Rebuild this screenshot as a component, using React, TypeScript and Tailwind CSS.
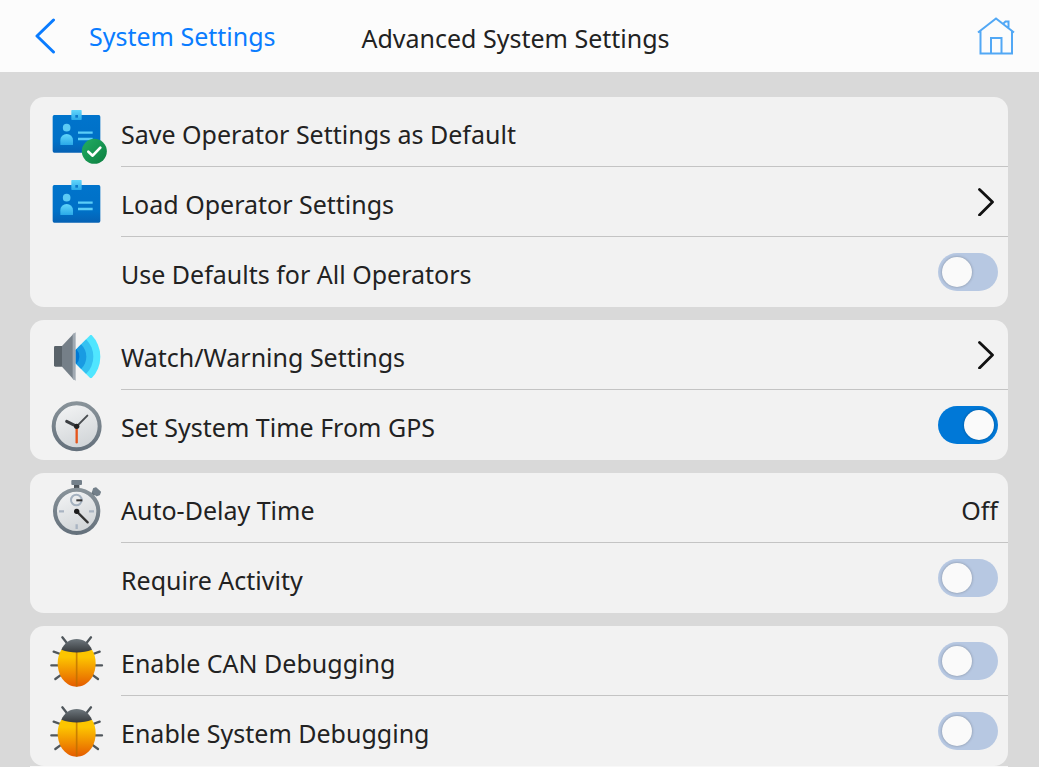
import React, { useState } from 'react';

function cn(...classes: (string | boolean | undefined | null)[]) {
  return classes.filter(Boolean).join(' ');
}

const ICON_CLASS = 'size-[60px] overflow-visible';

function OperatorIcon({ saved = false }: { saved?: boolean }) {
  return (
    <svg viewBox="0 0 180 180" className={ICON_CLASS} aria-hidden="true">
      <defs>
        <linearGradient id="badge-bg" x1="0" y1="0" x2="0" y2="1">
          <stop offset="0" stopColor="#0074cc" />
          <stop offset="0.7" stopColor="#0070c6" />
          <stop offset="1" stopColor="#0561b4" />
        </linearGradient>
        <linearGradient id="badge-fg" x1="0" y1="0" x2="0" y2="1">
          <stop offset="0" stopColor="#62d6fb" />
          <stop offset="1" stopColor="#2aa9e8" />
        </linearGradient>
        <linearGradient id="badge-ok" x1="0" y1="0" x2="1" y2="1">
          <stop offset="0" stopColor="#21ad64" />
          <stop offset="1" stopColor="#0d7f40" />
        </linearGradient>
      </defs>
      <rect x="20" y="39" width="143" height="113" rx="5" fill="url(#badge-bg)" />
      <rect x="76" y="24" width="31" height="30" rx="2" fill="url(#badge-fg)" />
      <rect x="88" y="39" width="8" height="8" fill="#0d78c9" />
      <circle cx="62" cy="77" r="11.5" fill="#5bcbf5" />
      <path d="M43 129v-14a19 19 0 0 1 38 0v14z" fill="url(#badge-fg)" />
      <path d="M96 92h44M96 111h44" stroke="#5bcdf7" strokeWidth="7" />
      {saved && (
        <>
          <circle cx="145" cy="148" r="37.5" fill="url(#badge-ok)" />
          <path d="M127 149l13 12 23-24" fill="none" stroke="#fff" strokeWidth="8" strokeLinecap="round" strokeLinejoin="round" />
        </>
      )}
    </svg>
  );
}

function SpeakerIcon() {
  return (
    <svg viewBox="0 0 180 180" className={ICON_CLASS} aria-hidden="true">
      <defs>
        <clipPath id="speaker-waves">
          <path d="M88 76L133 30h50v130h-50L88 114z" />
        </clipPath>
      </defs>
      <g clipPath="url(#speaker-waves)">
        <circle cx="69" cy="95" r="94" fill="#50e6ff" />
        <circle cx="69" cy="95" r="73" fill="#35c1f1" />
        <circle cx="69" cy="95" r="52" fill="#199be2" />
        <circle cx="69" cy="95" r="31" fill="#0078d4" />
      </g>
      <rect x="24" y="63" width="27" height="62" rx="4" fill="#596269" />
      <path d="M48 63l36-38v140l-36-40z" fill="#757f88" />
      <path d="M80 28l9-6v145l-9-6z" fill="#a0a9b2" />
    </svg>
  );
}

function DialGradients({ id }: { id: string }) {
  return (
    <defs>
      <linearGradient id={`${id}-rim`} x1="0" y1="0" x2="0" y2="1">
        <stop offset="0" stopColor="#889299" />
        <stop offset="1" stopColor="#65717c" />
      </linearGradient>
      <linearGradient id={`${id}-face`} x1="0.3" y1="0" x2="0.7" y2="1">
        <stop offset="0" stopColor="#f2f3f4" />
        <stop offset="1" stopColor="#cfd3d6" />
      </linearGradient>
    </defs>
  );
}

function ClockIcon() {
  return (
    <svg viewBox="0 0 180 180" className={ICON_CLASS} aria-hidden="true">
      <DialGradients id="clock" />
      <circle cx="92" cy="94" r="69" fill="url(#clock-face)" stroke="url(#clock-rim)" strokeWidth="12" />
      <path d="M92 94v48" stroke="#e5551b" strokeWidth="7" strokeLinecap="round" />
      <path d="M62 79l30 15" stroke="#3b3e42" strokeWidth="9" strokeLinecap="round" />
      <path d="M92 94l32-32" stroke="#4a4e52" strokeWidth="6" strokeLinecap="round" />
      <circle cx="92" cy="94" r="8" fill="#222" />
    </svg>
  );
}

function StopwatchIcon() {
  return (
    <svg viewBox="0 0 180 180" className={ICON_CLASS} aria-hidden="true">
      <DialGradients id="stopwatch" />
      <rect x="84" y="19" width="16" height="16" fill="#4b5258" />
      <rect x="76" y="6" width="32" height="15" rx="3" fill="#74808a" />
      <path d="M136 53l12-12" stroke="#5d6871" strokeWidth="12" />
      <path d="M143 32l7-2 13 12-3 8-8 3-12-11z" fill="#74808a" stroke="#74808a" strokeWidth="4" strokeLinejoin="round" />
      <circle cx="92" cy="100" r="65" fill="url(#stopwatch-face)" stroke="url(#stopwatch-rim)" strokeWidth="12" />
      <circle cx="91" cy="66" r="16" fill="none" stroke="#a4b1bf" strokeWidth="6" />
      <path d="M91 67h18" stroke="#333" strokeWidth="6" />
      <path d="M39 100h15M129 100h15M92 139v14" stroke="#a9b4c2" strokeWidth="7" />
      <path d="M92 100l33 33" stroke="#333" strokeWidth="7" strokeLinecap="round" />
      <circle cx="92" cy="100" r="8" fill="#1c1c1c" />
    </svg>
  );
}

function BugIcon() {
  return (
    <svg viewBox="0 0 180 180" className={ICON_CLASS} aria-hidden="true">
      <defs>
        <linearGradient id="bug-body" x1="0" y1="0" x2="0" y2="1">
          <stop offset="0.2" stopColor="#fdc500" />
          <stop offset="1" stopColor="#e55c00" />
        </linearGradient>
        <linearGradient id="bug-head" x1="0" y1="0" x2="0" y2="1">
          <stop offset="0" stopColor="#6e777d" />
          <stop offset="1" stopColor="#36393c" />
        </linearGradient>
      </defs>
      <path
        d="M49 19l13 16M135 19l-13 16M23 62l20 7M161 62l-20 7M16 103h22M168 103h-22M28 144l18-13M156 144l-18-13"
        stroke="#50575c"
        strokeWidth="7"
        strokeLinecap="round"
      />
      <path d="M46 56c-7 11-11 25-11 40 0 42 26 71 57 71s57-29 57-71c0-15-4-29-11-40z" fill="url(#bug-body)" />
      <path d="M92 60v107" stroke="#b96f00" strokeOpacity="0.75" strokeWidth="5" />
      <path d="M46 56c9-20 26-32 46-32s37 12 46 32c-28 11-64 11-92 0z" fill="url(#bug-head)" />
    </svg>
  );
}

function ChevronIcon() {
  return (
    <svg viewBox="0 0 16 28" className="w-4 h-7 mr-1 mb-1" fill="none" stroke="#111" strokeWidth="2.8" strokeLinecap="round" strokeLinejoin="round" aria-hidden="true">
      <path d="M1.5 1.5L14.5 14 1.5 27" />
    </svg>
  );
}

interface RowProps {
  icon?: React.ReactNode;
  last?: boolean;
  children: React.ReactNode;
}

function Row({ icon, last = false, children }: RowProps) {
  return (
    <li className="flex h-[70px]">
      <div className="w-[91px] shrink-0 pl-4 flex items-center">{icon}</div>
      <div className={cn('flex-1 min-w-0 flex items-stretch', !last && 'border-b border-[#c4c4c4]')}>{children}</div>
    </li>
  );
}

interface ActionRowProps {
  label: string;
  icon?: React.ReactNode;
  value?: string;
  chevron?: boolean;
  last?: boolean;
}

function ActionRow({ label, icon, value, chevron = false, last }: ActionRowProps) {
  return (
    <Row icon={icon} last={last}>
      <button type="button" className="flex-1 flex items-center justify-between pr-2.5 pt-1 text-left cursor-pointer">
        <span>{label}</span>
        {value && <span>{value}</span>}
        {chevron && <ChevronIcon />}
      </button>
    </Row>
  );
}

interface ToggleRowProps {
  id: string;
  label: string;
  icon?: React.ReactNode;
  defaultOn?: boolean;
  last?: boolean;
}

function ToggleRow({ id, label, icon, defaultOn = false, last }: ToggleRowProps) {
  const [on, setOn] = useState(defaultOn);

  return (
    <Row icon={icon} last={last}>
      <label htmlFor={id} className="flex-1 flex items-center pt-1 cursor-pointer">
        {label}
      </label>
      <input
        id={id}
        type="checkbox"
        role="switch"
        checked={on}
        onChange={(e) => setOn(e.target.checked)}
        className={cn(
          'appearance-none self-center shrink-0 mr-2.5 w-[60px] h-[38px] rounded-full p-1 flex items-center cursor-pointer',
          "before:content-[''] before:size-[30px] before:rounded-full before:bg-[#fafafa] before:shadow-[0_0_3px_rgba(0,0,0,0.3)]",
          on ? 'bg-[#0078d7] justify-end' : 'bg-[#b7c8e2] justify-start'
        )}
      />
    </Row>
  );
}

function Group({ children }: { children: React.ReactNode }) {
  return <ul className="bg-[#f2f2f2] rounded-[14px]">{children}</ul>;
}

export default function App() {
  return (
    <div className="h-screen overflow-hidden flex flex-col bg-[#d9d9d9] text-[#222] text-[25px] leading-8 font-['Noto_Sans','Open_Sans',sans-serif]">
      <header className="h-[72px] shrink-0 bg-[#fcfcfc] grid grid-cols-[1fr_auto_1fr] items-center pl-4 pr-6">
        <button type="button" className="justify-self-start flex items-center gap-8 pl-[19px] text-[#0a7cff] cursor-pointer">
          <svg viewBox="0 0 22 36" className="w-[22px] h-9" fill="none" stroke="currentColor" strokeWidth="3" strokeLinecap="round" strokeLinejoin="round" aria-hidden="true">
            <path d="M18.5 2L2 18l16.5 16" />
          </svg>
          <span>System Settings</span>
        </button>
        <h1 className="pt-1">Advanced System Settings</h1>
        <button type="button" aria-label="Home" className="justify-self-end cursor-pointer">
          <svg viewBox="0 0 38 38" className="size-[38px]" fill="none" stroke="#52a8f5" strokeWidth="2" aria-hidden="true">
            <path d="M1 15.5l18-14 18 14M3.5 14v22.5h31.5V14M14 36.5V21h10.500v15.500M26.500 6.500l2-2h3v6" />
          </svg>
        </button>
      </header>

      <main className="flex-1 min-h-0 overflow-hidden pt-[25px] pl-[30px] pr-[31px] flex flex-col gap-[13px]">
        <Group>
          <ActionRow icon={<OperatorIcon saved />} label="Save Operator Settings as Default" />
          <ActionRow icon={<OperatorIcon />} label="Load Operator Settings" chevron />
          <ToggleRow id="use-defaults" label="Use Defaults for All Operators" last />
        </Group>
        <Group>
          <ActionRow icon={<SpeakerIcon />} label="Watch/Warning Settings" chevron />
          <ToggleRow id="gps-time" icon={<ClockIcon />} label="Set System Time From GPS" defaultOn last />
        </Group>
        <Group>
          <ActionRow icon={<StopwatchIcon />} label="Auto-Delay Time" value="Off" />
          <ToggleRow id="require-activity" label="Require Activity" last />
        </Group>
        <div>
          <Group>
            <ToggleRow id="can-debugging" icon={<BugIcon />} label="Enable CAN Debugging" />
            <ToggleRow id="system-debugging" icon={<BugIcon />} label="Enable System Debugging" last />
          </Group>
          <div className="h-px bg-[#f8f8f8]" />
        </div>
      </main>
    </div>
  );
}
